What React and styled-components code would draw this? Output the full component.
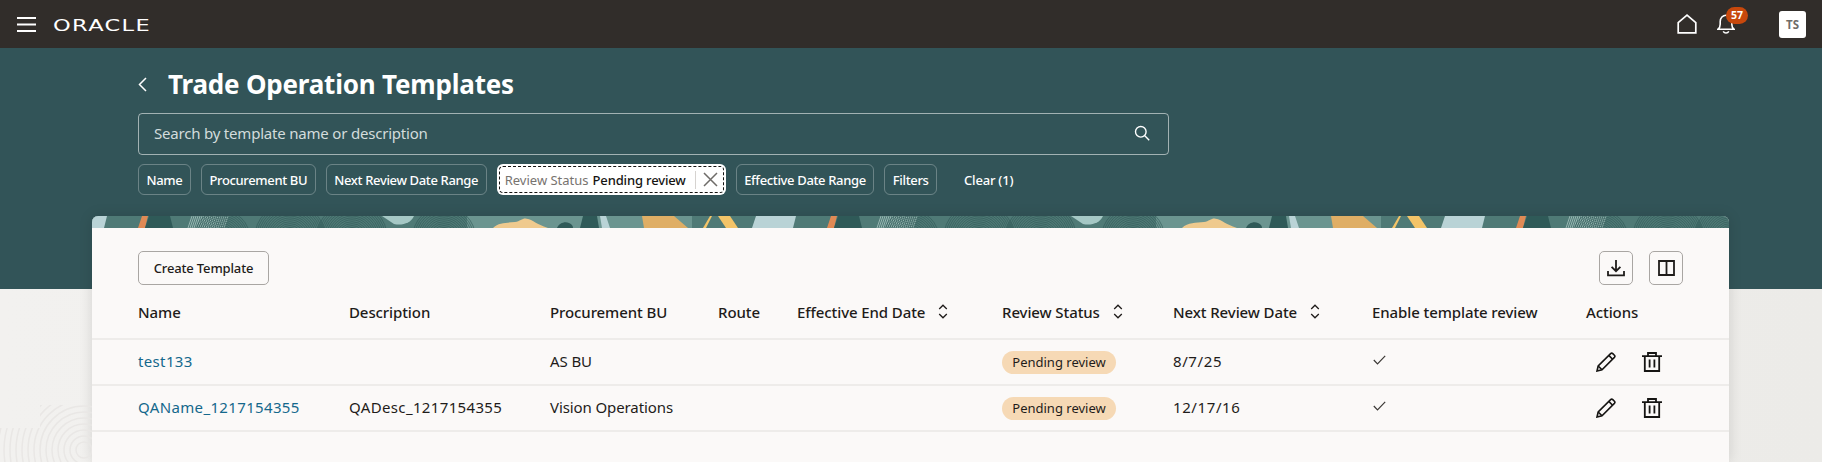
import React from "react";
import styled, { createGlobalStyle } from "styled-components";

const FONT = `"Noto Sans", "Open Sans", sans-serif`;
const COLUMNS = "211px 201px 168px 79px 205px 171px 199px 214px 1fr";

const GlobalStyle = createGlobalStyle`
  html, body { margin: 0; padding: 0; height: 100%; overflow: hidden; }
  body { font-family: ${FONT}; background: #f1f0ee; color: #1f1c1a; }
  #root { height: 100%; }
`;

const Page = styled.div`
  height: 462px;
  display: flex;
  flex-direction: column;
  overflow: hidden;
`;

const TopBar = styled.header`
  flex: none;
  height: 48px;
  background: #312d2a;
  display: flex;
  align-items: center;
  padding: 0 16px 0 17px;
  color: #fff;
`;

const Logo = styled.span`
  margin: 4px 0 0 17px;
  font-family: "DejaVu Sans", sans-serif;
  font-size: 15px;
  letter-spacing: 0.9px;
  line-height: 1;
  width: 95px;
  transform: scaleX(1.5);
  transform-origin: left center;
`;

const TopActions = styled.div`
  margin-left: auto;
  display: flex;
  align-items: center;
`;

const BellWrap = styled.div`
  position: relative;
  display: flex;
  margin: 0 44px 0 20px;
`;

const Badge = styled.span`
  position: absolute;
  top: -7px;
  left: 9px;
  width: 22px;
  height: 17px;
  border-radius: 9px;
  background: #c8480c;
  color: #fff;
  font-size: 10.5px;
  font-weight: 700;
  line-height: 16px;
  text-align: center;
`;

const Avatar = styled.span`
  width: 27px;
  height: 27px;
  border-radius: 3px;
  background: #fff;
  color: #6f6c69;
  font-size: 11.5px;
  font-weight: 700;
  line-height: 27px;
  text-align: center;
`;

const Main = styled.main`
  flex: 1;
  position: relative;
  min-height: 0;
  display: flex;
  flex-direction: column;
  background: linear-gradient(#325458 241px, transparent 241px),
    linear-gradient(90deg, #f2f1ef, #ecebe8);
`;

const Hero = styled.section`
  flex: none;
  padding: 18px 0 21px 138px;
  color: #fff;
`;

const TitleRow = styled.div`
  height: 36px;
  display: flex;
  align-items: center;
  gap: 21px;
`;

const Title = styled.h1`
  margin: 0;
  font-size: 26px;
  font-weight: 700;
  line-height: 36px;
  letter-spacing: -0.2px;
`;

const SearchBox = styled.div`
  box-sizing: border-box;
  width: 1031px;
  height: 42px;
  margin-top: 11px;
  padding: 0 18px 2px 15px;
  display: flex;
  align-items: center;
  justify-content: space-between;
  border: 1px solid rgba(255, 255, 255, 0.55);
  border-radius: 4px;
  font-size: 15px;
  letter-spacing: -0.2px;
  color: #d3dcdc;
`;

const Chips = styled.div`
  margin-top: 9px;
  display: flex;
  align-items: center;
  gap: 10px;
`;

const Chip = styled.span`
  box-sizing: border-box;
  height: 31px;
  padding: 0 7.5px;
  display: flex;
  align-items: center;
  border: 1px solid rgba(255, 255, 255, 0.28);
  border-radius: 6px;
  font-size: 13px;
  font-weight: 500;
  letter-spacing: -0.35px;
  white-space: nowrap;
`;

const ActiveChip = styled(Chip)`
  border: 0;
  padding: 0 8px;
  background: #fff;
  color: #161513;
  letter-spacing: -0.15px;
  outline: 1px dashed #161513;
  outline-offset: -3px;
`;

const ChipLabel = styled.span`
  color: #77736f;
  font-weight: 400;
  letter-spacing: 0;
  margin-right: 4px;
`;

const ChipDivider = styled.span`
  width: 1px;
  height: 18px;
  margin: 0 7px 0 9px;
  background: #d6d3d0;
`;

const ClearLink = styled.span`
  margin-left: 17px;
  font-size: 13px;
  font-weight: 500;
  letter-spacing: -0.2px;
`;

const Card = styled.section`
  flex: 1;
  min-height: 0;
  margin: 0 93px 0 92px;
  display: flex;
  flex-direction: column;
  border-radius: 6px 6px 0 0;
  overflow: hidden;
  background: #fbf9f8;
  box-shadow: 0 0 14px rgba(0, 0, 0, 0.13);
`;

const Banner = styled.svg`
  flex: none;
  display: block;
  width: 100%;
  height: 12px;
`;

const Toolbar = styled.div`
  flex: none;
  display: flex;
  justify-content: space-between;
  padding: 23px 46px 0;
`;

const ToolGroup = styled.div`
  display: flex;
  gap: 16px;
`;

const OutlineButton = styled.button`
  box-sizing: border-box;
  height: 34px;
  padding: 0;
  width: ${(p) => p.$width || 34}px;
  display: flex;
  align-items: center;
  justify-content: center;
  background: transparent;
  border: 1px solid #a9a6a3;
  border-radius: 5px;
  color: #1f1c1a;
  font-family: ${FONT};
  font-size: 13px;
  font-weight: 500;
  letter-spacing: -0.15px;
`;

const Row = styled.div`
  flex: none;
  box-sizing: border-box;
  height: ${(p) => p.$height}px;
  padding-left: 46px;
  display: grid;
  grid-template-columns: ${COLUMNS};
  align-items: center;
  border-bottom: 2px solid #eeecea;
  font-size: 15px;
`;

const HeadCell = styled.div`
  display: flex;
  align-items: center;
  gap: 13px;
  font-size: 15px;
  font-weight: 500;
  letter-spacing: -0.1px;
  color: #1f1c1a;
  white-space: nowrap;
`;

const TextCell = styled.div`
  letter-spacing: ${(p) => p.$spacing || 0}px;
  padding-bottom: 2px;
`;

const NameLink = styled.a`
  color: #14688c;
`;

const StatusPill = styled.span`
  display: inline-block;
  width: 114px;
  height: 23px;
  border-radius: 12px;
  background: #f6d9b5;
  font-size: 13px;
  line-height: 23px;
  text-align: center;
`;

const Actions = styled.div`
  display: flex;
  gap: 26px;
  padding-left: 10px;
`;

const CheckCell = styled.div`
  display: flex;
  padding: 0 0 4px 1px;
`;

const Texture = styled.svg`
  position: absolute;
  left: 0;
  bottom: 0;
  width: 92px;
  height: 62px;
`;

const Hamburger = () => (
  <svg width="19" height="15" viewBox="0 0 19 15" fill="none" stroke="#fff" strokeWidth="2">
    <path d="M0 1h19M0 7.5h19M0 14h19" />
  </svg>
);

const HomeIcon = () => (
  <svg width="20" height="20" viewBox="0 0 20 20" fill="none" stroke="#fff" strokeWidth="1.7">
    <path d="M10 1.2 1.2 8.6v10.2h17.6V8.6z" strokeLinejoin="miter" />
  </svg>
);

const BellIcon = () => (
  <svg width="18" height="20" viewBox="0 0 18 20" fill="none" stroke="#fff" strokeWidth="1.6">
    <path d="M1 15.2h16c-1.6-1.2-2.2-2.6-2.2-5V7.5C14.8 4 12.2 1.2 9 1.2S3.2 4 3.2 7.5v2.7c0 2.4-.6 3.8-2.2 5z" />
    <path d="M6.2 17.4c.6 1 1.6 1.6 2.8 1.6s2.2-.6 2.8-1.6" />
  </svg>
);

const BackIcon = () => (
  <svg width="9" height="15" viewBox="0 0 9 15" fill="none" stroke="#fff" strokeWidth="1.5">
    <path d="M8 1 1.5 7.5 8 14" />
  </svg>
);

const SearchIcon = () => (
  <svg width="16" height="16" viewBox="0 0 16 16" fill="none" stroke="#fff" strokeWidth="1.4">
    <circle cx="6.8" cy="6.8" r="5.3" />
    <path d="m10.8 10.8 4.4 4.4" />
  </svg>
);

const CloseIcon = () => (
  <svg width="15" height="15" viewBox="0 0 15 15" fill="none" stroke="#6f6c69" strokeWidth="1.5">
    <path d="m1 1 13 13M14 1 1 14" />
  </svg>
);

const DownloadIcon = () => (
  <svg width="18" height="18" viewBox="0 0 18 18" fill="none" stroke="#1f1c1a" strokeWidth="1.8">
    <path d="M9 1v11M4.6 7.8 9 12.2l4.4-4.4M1 12v4.4h16V12" />
  </svg>
);

const ColumnsIcon = () => (
  <svg width="17" height="16" viewBox="0 0 17 16" fill="none" stroke="#1f1c1a" strokeWidth="1.8">
    <path d="M1 1h15v14H1zM8.5 1v14" />
  </svg>
);

const SortIcon = () => (
  <svg width="10" height="15" viewBox="0 0 10 15" fill="none" stroke="#1f1c1a" strokeWidth="1.3">
    <path d="m1.2 5 3.8-3.8L8.8 5M1.2 10 5 13.8 8.8 10" />
  </svg>
);

const CheckIcon = () => (
  <svg width="13" height="10" viewBox="0 0 13 10" fill="none" stroke="#3b3835" strokeWidth="1.2">
    <path d="m.8 5 3.7 3.8L12.2.8" />
  </svg>
);

const PencilIcon = () => (
  <svg width="20" height="20" viewBox="0 0 20 20" fill="none" stroke="#161513" strokeWidth="1.6">
    <path d="M1 19l1.2-5L14.6 1.6a1.6 1.6 0 0 1 2.2 0l1.6 1.6a1.6 1.6 0 0 1 0 2.2L6 17.8z" />
    <path d="M2.2 14 6 17.8" />
    <path d="m12.8 3.4 3.8 3.8" />
  </svg>
);

const TrashIcon = () => (
  <svg width="20" height="20" viewBox="0 0 20 20" fill="none" stroke="#161513" strokeWidth="1.8">
    <path d="M0 4.2h20M6 4.2V1h8v3.2M2.8 4.2V19h14.4V4.2M7.6 7.6v8M12.4 7.6v8" />
  </svg>
);

// concentric ridges of the fingerprint marks in the banner
const Ridges = ({ cx, cy, max, color = "#2c5452" }) => (
  <g fill="none" stroke={color} strokeWidth="0.55">
    {Array.from({ length: Math.floor(max / 1.9) }, (_, i) => (
      <circle key={i} cx={cx} cy={cy} r={3 + i * 1.9} />
    ))}
  </g>
);

const Hatch = ({ from, to }) => (
  <g stroke="#b5cfcb" strokeWidth="0.7">
    {Array.from({ length: Math.floor((to - from) / 2) }, (_, i) => (
      <path key={i} d={`M${from + i * 2 + 4} 0 l-4 12`} />
    ))}
  </g>
);

const BannerTile = () => (
  <g>
    <rect width="689" height="12" fill="#4f7a76" />
    <rect x="375" width="225" height="12" fill="#6b9590" />
    <path d="M0 0h15l-3 12H0z" fill="#b9d3d6" />
    <path d="M50 0h6l-3 12h-7z" fill="#e08a55" />
    <path d="M57 0h21l3 12H53z" fill="#2f5a58" />
    <Hatch from={96} to={134} />
    <Ridges cx={130} cy={22} max={28} />
    <Ridges cx={198} cy={22} max={36} />
    <Ridges cx={260} cy={22} max={36} />
    <path d="M290 0h32c-3 7-12 10-20 8z" fill="#a5c8c5" />
    <Ridges cx={352} cy={22} max={32} />
    <path d="M401 12c6-6 14-5 22-6 6-1 8-5 13-3 5 1 8 5 20 9z" fill="#efca8e" />
    <path d="M465 12c2-5 8-7 12-5 3 1 4 3 4 5z" fill="#2f5a58" />
    <path d="M491 0h14l2 12h-19z" fill="#2f5a58" />
    <path d="M508 0h6l4 12h-8z" fill="#b9d3d6" />
    <path d="M550 0h32l14 12h-44z" fill="#dfae65" />
    <path d="M618 0h2l-6 12h-3z" fill="#f3c468" />
    <path d="M626 0h12l8 12h-12z" fill="#f3c468" />
    <path d="M664 0h25v12h-29z" fill="#b9d3d6" />
  </g>
);

const data = [
  { name: "test133", desc: "", bu: "AS BU", date: "8/7/25" },
  { name: "QAName_1217154355", desc: "QADesc_1217154355", bu: "Vision Operations", date: "12/17/16" },
];

export default function App() {
  return (
    <Page>
      <GlobalStyle />
      <TopBar>
        <Hamburger />
        <Logo>ORACLE</Logo>
        <TopActions>
          <HomeIcon />
          <BellWrap>
            <BellIcon />
            <Badge>57</Badge>
          </BellWrap>
          <Avatar>TS</Avatar>
        </TopActions>
      </TopBar>
      <Main>
        <Texture viewBox="0 0 92 62" fill="none" stroke="#e9e7e5" strokeWidth="1.5">
          <clipPath id="texture-clip">
            <path d="M40 5h52v23H40zM0 28h92v34H0z" />
          </clipPath>
          <g clipPath="url(#texture-clip)">
            {Array.from({ length: 20 }, (_, i) => (
              <circle key={i} cx="84" cy="50" r={8 + i * 6} />
            ))}
          </g>
        </Texture>
        <Hero>
          <TitleRow>
            <BackIcon />
            <Title>Trade Operation Templates</Title>
          </TitleRow>
          <SearchBox>
            <span>Search by template name or description</span>
            <SearchIcon />
          </SearchBox>
          <Chips>
            <Chip>Name</Chip>
            <Chip>Procurement BU</Chip>
            <Chip>Next Review Date Range</Chip>
            <ActiveChip>
              <ChipLabel>Review Status</ChipLabel>
              Pending review
              <ChipDivider />
              <CloseIcon />
            </ActiveChip>
            <Chip>Effective Date Range</Chip>
            <Chip>Filters</Chip>
            <ClearLink>Clear (1)</ClearLink>
          </Chips>
        </Hero>
        <Card>
          <Banner viewBox="0 0 1637 12" preserveAspectRatio="xMinYMin slice">
            <BannerTile />
            <g transform="translate(689 0)">
              <BannerTile />
            </g>
            <g transform="translate(1378 0)">
              <BannerTile />
            </g>
          </Banner>
          <Toolbar>
            <OutlineButton $width={131}>Create Template</OutlineButton>
            <ToolGroup>
              <OutlineButton>
                <DownloadIcon />
              </OutlineButton>
              <OutlineButton>
                <ColumnsIcon />
              </OutlineButton>
            </ToolGroup>
          </Toolbar>
          <Row $height={55}>
            <HeadCell>Name</HeadCell>
            <HeadCell>Description</HeadCell>
            <HeadCell>Procurement BU</HeadCell>
            <HeadCell>Route</HeadCell>
            <HeadCell>
              Effective End Date <SortIcon />
            </HeadCell>
            <HeadCell>
              Review Status <SortIcon />
            </HeadCell>
            <HeadCell>
              Next Review Date <SortIcon />
            </HeadCell>
            <HeadCell>Enable template review</HeadCell>
            <HeadCell>Actions</HeadCell>
          </Row>
          {data.map((row) => (
            <Row key={row.name} $height={46}>
              <TextCell $spacing={0.35}>
                <NameLink>{row.name}</NameLink>
              </TextCell>
              <TextCell $spacing={0.35}>{row.desc}</TextCell>
              <TextCell $spacing={-0.1}>{row.bu}</TextCell>
              <div />
              <div />
              <div>
                <StatusPill>Pending review</StatusPill>
              </div>
              <TextCell $spacing={0.6}>{row.date}</TextCell>
              <CheckCell>
                <CheckIcon />
              </CheckCell>
              <Actions>
                <PencilIcon />
                <TrashIcon />
              </Actions>
            </Row>
          ))}
        </Card>
      </Main>
    </Page>
  );
}
